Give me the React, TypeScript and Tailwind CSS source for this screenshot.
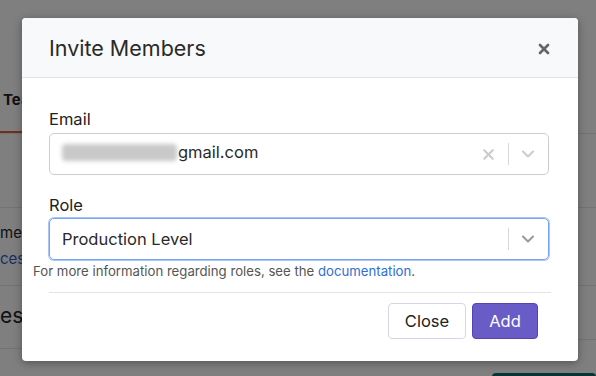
import { X, ChevronDown } from "lucide-react";

const font = { fontFamily: "Inter, 'Noto Sans', sans-serif" };

function Page() {
  return (
    <div className="h-[376px] w-[596px] overflow-hidden bg-white text-[#222]">
      {/* tabs */}
      <div className="flex h-[134px] items-end border-b border-[#e6e6e6]">
        <div className="border-b-2 border-[#e0603f] pb-[20px] pl-[3px] pr-6 text-[15px] font-bold">Teams</div>
      </div>
      <div className="h-[74px] border-b border-[#e6e6e6]" />
      <div className="flex h-[78px] flex-col border-b border-[#e6e6e6] pt-[12px] text-[15px] leading-[26px]">
        <span>mers</span>
        <span className="text-[#2c64c6]">cess</span>
      </div>
      <div className="flex">
        <div className="h-[63px] w-[300px] border-b border-[#e6e6e6] pt-[14px] text-[21px]">ess</div>
        <div className="flex-1">
          <div className="h-[54px] border-b border-[#e6e6e6]" />
          <div className="ml-[192px] mt-[33px] h-[30px] rounded bg-[#0d6b6b]" />
        </div>
      </div>
    </div>
  );
}

function SelectBox({ children, focused, clearable }: { children: React.ReactNode; focused?: boolean; clearable?: boolean }) {
  return (
    <div
      className={
        focused
          ? "flex h-[42px] w-[500px] items-center rounded-[5px] border border-[#77a4ee] shadow-[0_0_0_1px_#a9c6f6] pl-[12px] pr-[10px]"
          : "flex h-[42px] w-[500px] items-center rounded-[5px] border border-[#cccccc] pl-[12px] pr-[10px]"
      }
    >
      <div className="flex-1 text-[16.5px] text-[#2a2a2a]">{children}</div>
      {clearable && <X size={17} strokeWidth={3} className="mr-[11px] text-[#cccccc]" />}
      <div className="h-[22px] w-px bg-[#d6d6d6]" />
      <ChevronDown size={20} strokeWidth={2.5} className={focused ? "ml-[9px] text-[#9a9a9a]" : "ml-[9px] text-[#cccccc]"} />
    </div>
  );
}

export default function App() {
  return (
    <div className="relative" style={font}>
      <Page />
      <div className="absolute inset-0 bg-black/50 pl-[22px] pt-[18px]">
        <div className="w-[556px] overflow-hidden rounded-[4px] bg-white shadow-[0_2px_8px_rgba(0,0,0,0.35)]">
          <div className="flex h-[60px] items-center justify-between border-b border-[#e3e4e8] bg-[#f8f9fb] pl-[27px] pr-[26px] pt-[2px]">
            <h2 className="text-[21.5px] text-[#2a2a2a]">Invite Members</h2>
            <X size={16} strokeWidth={4} className="text-[#666]" />
          </div>
          <div className="px-[27px] pt-[31px] pb-[22px]">
            <label className="block text-[16.5px] leading-[20px] text-[#222]">Email</label>
            <div className="mt-[4px]">
              <SelectBox clearable>
                <span className="inline-flex items-center">
                  <span className="mr-px inline-block h-[17px] w-[115px] rounded-sm bg-[#c9c9c9] blur-[2px]" />
                  gmail.com
                </span>
              </SelectBox>
            </div>
            <label className="mt-[20px] block text-[16.5px] leading-[20px] text-[#222]">Role</label>
            <div className="mt-[3px]">
              <SelectBox focused>Production Level</SelectBox>
            </div>
            <p className="-ml-[16px] mt-[2px] text-[13.2px] leading-[18px] text-[#555]">
              For more information regarding roles, see the <a className="text-[#2e6fd3]">documentation</a>.
            </p>
            <div className="mt-[12px] border-t border-[#e2e2e2]" />
            <div className="mt-[10px] flex justify-end gap-[6px] pr-[13px]">
              <button className="h-[36px] w-[78px] rounded-[4px] border border-[#d8d5e8] bg-white text-[16.5px] text-[#222]">Close</button>
              <button className="h-[36px] w-[66px] rounded-[4px] border border-[#5444b0] bg-[#6a5cc6] text-[16.5px] text-white">Add</button>
            </div>
          </div>
        </div>
      </div>
    </div>
  );
}
